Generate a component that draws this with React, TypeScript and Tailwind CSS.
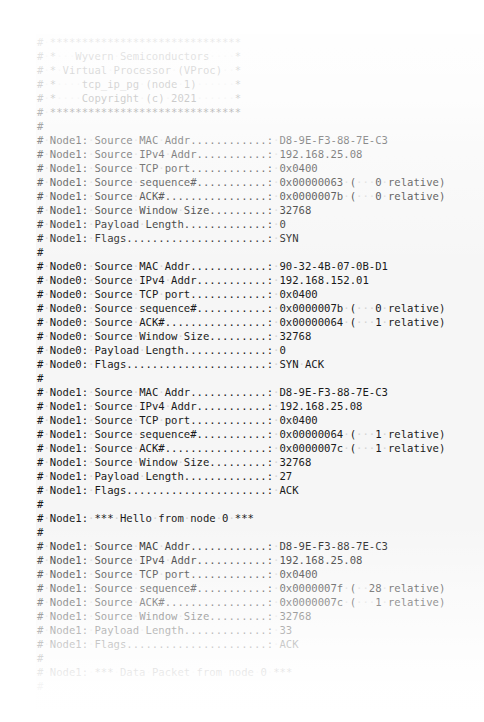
const header = [
  '# ******************************',
  '# *   Wyvern Semiconductors    *',
  '# * Virtual Processor (VProc)  *',
  '# *    tcp_ip_pg (node 1)      *',
  '# *    Copyright (c) 2021      *',
  '# ******************************',
  '#',
];

const labels = [
  'Source MAC Addr',
  'Source IPv4 Addr',
  'Source TCP port',
  'Source sequence#',
  'Source ACK#',
  'Source Window Size',
  'Payload Length',
  'Flags',
];

type Packet = { node: string; values: string[] };

const packets: Packet[] = [
  {
    node: 'Node1',
    values: ['D8-9E-F3-88-7E-C3', '192.168.25.08', '0x0400', '0x00000063 (   0 relative)', '0x0000007b (   0 relative)', '32768', '0', 'SYN'],
  },
  {
    node: 'Node0',
    values: ['90-32-4B-07-0B-D1', '192.168.152.01', '0x0400', '0x0000007b (   0 relative)', '0x00000064 (   1 relative)', '32768', '0', 'SYN ACK'],
  },
  {
    node: 'Node1',
    values: ['D8-9E-F3-88-7E-C3', '192.168.25.08', '0x0400', '0x00000064 (   1 relative)', '0x0000007c (   1 relative)', '32768', '27', 'ACK'],
  },
  {
    node: 'Node1',
    values: ['D8-9E-F3-88-7E-C3', '192.168.25.08', '0x0400', '0x0000007f (  28 relative)', '0x0000007c (   1 relative)', '32768', '33', 'ACK'],
  },
];

function block(p: Packet) {
  return labels.map((l, i) => `# ${p.node}: ${l.padEnd(27, '.')}: ${p.values[i]}`);
}

const lines: string[] = [
  ...header,
  ...block(packets[0]),
  '#',
  ...block(packets[1]),
  '#',
  ...block(packets[2]),
  '#',
  '# Node1: *** Hello from node 0 ***',
  '#',
  ...block(packets[3]),
  '#',
  '# Node1: *** Data Packet from node 0 ***',
  '#',
];

// spaces shown as faint dots, like an editor with "show whitespace" on
function Line({ text }: { text: string }) {
  const parts = text.split(/( +)/);
  return (
    <div className="h-[14px] leading-[14px] whitespace-pre">
      {parts.map((part, i) =>
        part.startsWith(' ') ? (
          <span key={i} className="text-[#d4d4d4]">
            {'·'.repeat(part.length)}
          </span>
        ) : (
          <span key={i}>{part}</span>
        )
      )}
    </div>
  );
}

export default function App() {
  return (
    <div className="relative w-[484px] h-[722px] overflow-hidden bg-white pt-[34px] pl-[36px]">
      <div className="bg-[#f6f6f6] pt-px pl-px pb-4 text-[10.6px] text-[#1a1a1a] font-['DejaVu_Sans_Mono',monospace]">
        {lines.map((l, i) => (
          <Line key={i} text={l} />
        ))}
      </div>

      {/* fades over the log */}
      <div className="pointer-events-none absolute inset-x-0 top-0 h-[265px] bg-[linear-gradient(to_bottom,rgba(255,255,255,1)_0px,rgba(255,255,255,0.9)_40px,rgba(255,255,255,0.78)_100px,rgba(255,255,255,0.5)_140px,rgba(255,255,255,0.15)_235px,rgba(255,255,255,0)_265px)]" />
      <div className="pointer-events-none absolute inset-x-0 bottom-0 h-[200px] bg-[linear-gradient(to_top,rgba(255,255,255,1)_0px,rgba(255,255,255,0.95)_40px,rgba(255,255,255,0.75)_80px,rgba(255,255,255,0.45)_130px,rgba(255,255,255,0)_200px)]" />
    </div>
  );
}
